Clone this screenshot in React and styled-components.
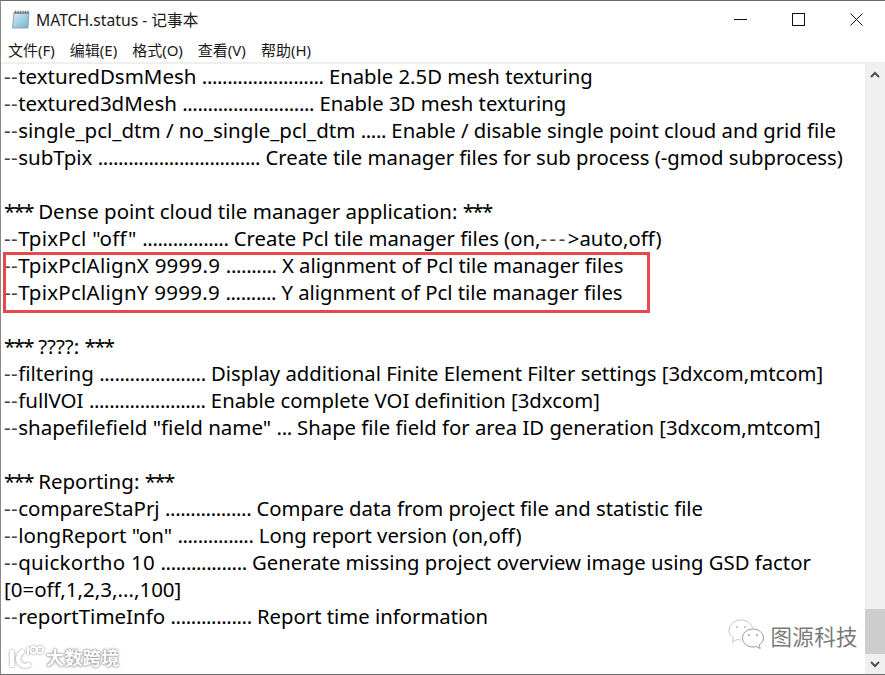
import React from 'react';
import styled, { createGlobalStyle } from 'styled-components';

const Global = createGlobalStyle`
  html, body { margin: 0; padding: 0; background: #fff; }
`;

const Window = styled.div`
  position: relative;
  box-sizing: border-box;
  width: 885px;
  height: 675px;
  overflow: hidden;
  background: #fff;
  border-top: 1px solid #6a6a6a;
  border-left: 1px solid #8a8a8a;
  border-bottom: 1px solid #6a6a6a;
  display: flex;
  flex-direction: column;
  font-family: "Noto Sans", "Noto Sans CJK SC", sans-serif;
  color: #000;
`;
const TitleBar = styled.div`
  height: 36px;
  flex: none;
  display: flex;
  align-items: center;
  padding-left: 10px;
`;
const NoteIcon = styled.svg`
  width: 20px;
  height: 21px;
  margin-right: 5px;
`;
const Title = styled.div`
  flex: 1;
  font-size: 15.7px;
  color: #1a1a1a;
`;
const WinButton = styled.div`
  width: 58px;
  height: 36px;
  display: flex;
  align-items: center;
  justify-content: center;
`;
const MenuBar = styled.div`
  height: 25px;
  flex: none;
  display: flex;
  gap: 15px;
  padding-left: 7px;
  font-size: 15px;
  align-items: center;
  color: #1a1a1a;
  border-bottom: 2px solid #efefef;
`;
const Body = styled.div`
  flex: 1;
  display: flex;
  min-height: 0;
`;
const TextArea = styled.div`
  flex: 1;
  padding-left: 3px;
  font-size: 20.5px;
  line-height: 27px;
  white-space: pre;
  position: relative;
`;
const TextFlow = styled.div`
  margin-top: -1px;
`;
const Line = styled.div`
  height: 27px;
`;
const Dash = styled.span`
  color: #444;
  letter-spacing: 0.5px;
`;
const Label = styled.span`
  letter-spacing: ${({ $wide }) => ($wide ? '0.25px' : '0')};
`;
const Dots = styled.span`
  letter-spacing: -0.42px;
`;
const Desc = styled.span`
  font-size: 20.3px;
`;
const Arrow = styled.span`
  color: #444;
  letter-spacing: 2.6px;
`;
const Stars = styled.span`
  letter-spacing: -1.7px;
`;
const Highlight = styled.div`
  position: absolute;
  left: 2px;
  top: 188px;
  width: 641px;
  height: 55px;
  border: 3px solid #e5484d;
`;
const Scrollbar = styled.div`
  width: 20px;
  flex: none;
  background: #f0f0f0;
  display: flex;
  flex-direction: column;
`;
const ScrollButton = styled.div`
  height: 20px;
  display: flex;
  align-items: center;
  justify-content: center;
`;
const ScrollTrack = styled.div`
  flex: 1;
  display: flex;
  flex-direction: column;
  justify-content: flex-end;
`;
const ScrollThumb = styled.div`
  height: 45px;
  background: #cdcdcd;
`;
const Watermark = styled.div`
  position: absolute;
  right: 27px;
  bottom: 23px;
  display: flex;
  align-items: center;
  gap: 5px;
  color: #7a7a7a;
  font-size: 21.500px;
  letter-spacing: 0.4px;
`;
const Corner = styled.div`
  position: absolute;
  left: 7px;
  bottom: 4px;
  display: flex;
  align-items: center;
  gap: 2px;
  color: #fff;
  font-size: 18px;
  font-weight: 700;
  letter-spacing: 0.4px;
  text-shadow: 0 0 3px #999, 0 0 2px #999, 0 0 1px #888;
`;
const CornerMark = styled.svg`
  filter: drop-shadow(0 0 1px #888);
`;

const LINES = [
  ['--', 'texturedDsmMesh ', '........................', ' Enable 2.5D mesh texturing'],
  ['--', 'textured3dMesh ', '..........................', ' Enable 3D mesh texturing'],
  ['--', 'single_pcl_dtm / no_single_pcl_dtm ', '.....', ' Enable / disable single point cloud and grid file'],
  ['--', 'subTpix ', '................................', ' Create tile manager files for sub process (-gmod subprocess)'],
  [],
  { title: ' Dense point cloud tile manager application: ' },
  ['--', 'TpixPcl "off" ', '.................', ' Create Pcl tile manager files (on,', 'auto,off)'],
  ['--', 'TpixPclAlignX 9999.9 ', '..........', ' X alignment of Pcl tile manager files'],
  ['--', 'TpixPclAlignY 9999.9 ', '..........', ' Y alignment of Pcl tile manager files'],
  [],
  { title: ' ????: ' },
  ['--', 'filtering ', '.....................', ' Display additional Finite Element Filter settings [3dxcom,mtcom]'],
  ['--', 'fullVOI ', '.......................', ' Enable complete VOI definition [3dxcom]'],
  ['--', 'shapefilefield "field name" ', '...', ' Shape file field for area ID generation [3dxcom,mtcom]'],
  [],
  { title: ' Reporting: ' },
  ['--', 'compareStaPrj ', '.................', ' Compare data from project file and statistic file'],
  ['--', 'longReport "on" ', '...............', ' Long report version (on,off)'],
  ['--', 'quickortho 10 ', '.................', ' Generate missing project overview image using GSD factor'],
  ['', '[0=off,1,2,3,...,100]'],
  ['--', 'reportTimeInfo ', '................', ' Report time information'],
];

const MENUS = ['文件(F)', '编辑(E)', '格式(O)', '查看(V)', '帮助(H)'];

function NotepadIcon() {
  return (
    <NoteIcon viewBox="0 0 20 21">
      <defs>
        <linearGradient id="pad" x1="0" y1="0" x2="1" y2="1">
          <stop offset="0" stopColor="#d8eef7" />
          <stop offset="1" stopColor="#6fb4cf" />
        </linearGradient>
      </defs>
      <path d="M3 3h15l-1 16H1.500z" fill="url(#pad)" stroke="#7f9aa6" strokeWidth="0.8" />
      <path d="M3 3h15v2H3z" fill="#8d9aa1" />
      <path d="M4.500 1.500v3M7 1.500v3M9.500 1.500v3M12 1.500v3M14.500 1.500v3M17 1.500v3" stroke="#5f6b72" strokeWidth="0.8" />
    </NoteIcon>
  );
}

function WechatMark() {
  return (
    <svg width="37" height="32" viewBox="0 0 37 32">
      <path d="M13 1C6.500 1 1 5.500 1 11c0 3.200 1.700 5.800 4.500 7.800L4.500 23l4.500-2.500c1.200.3 2.300.5 4 .5" fill="none" stroke="#c8c8c8" strokeWidth="1" />
      <path d="M13 1c5.800 0 10.500 3.300 11.700 8" fill="none" stroke="#c8c8c8" strokeWidth="1" />
      <path d="M25 10c-6 0-10.500 4-10.500 9s4.500 9 10.500 9c1.200 0 2.200-.2 3.200-.5l4 2-1-3.600c2.500-1.700 4.300-4 4.300-6.900 0-5-4.500-9-10.500-9z" fill="#fff" stroke="#9a9a9a" strokeWidth="1" />
      <circle cx="9" cy="8" r="1" fill="#b5b5b5" />
      <circle cx="17" cy="8" r="1" fill="#b5b5b5" />
      <circle cx="21" cy="16" r="0.9" fill="#999" />
      <circle cx="29" cy="16" r="0.9" fill="#999" />
    </svg>
  );
}

function CornerLogo() {
  return (
    <CornerMark width="36" height="26" viewBox="0 0 36 26" fill="none" stroke="#fff">
      <path d="M4 6v17" strokeWidth="4.500" />
      <path d="M16 7c-5 2-7 7-5 11 2 4 7 5 11 2" strokeWidth="4.500" />
      <path d="M20 3v8" strokeWidth="2" />
      <circle cx="25.500" cy="6" r="3.200" strokeWidth="2" />
      <circle cx="32" cy="6" r="3.200" strokeWidth="2" />
    </CornerMark>
  );
}

function Chevron({ up }) {
  return (
    <svg width="10" height="7" viewBox="0 0 10 7">
      <path d={up ? 'M1 6l4-4 4 4' : 'M1 1l4 4 4-4'} fill="none" stroke="#505050" strokeWidth="2" />
    </svg>
  );
}

function TextLine({ line }) {
  if (line.title) {
    return <Line><Stars>***</Stars>{line.title}<Stars>***</Stars></Line>;
  }
  const wide = /^(Tpix|quick)/.test(line[1] || '');
  return (
    <Line>
      {line[0] && <Dash>{line[0]}</Dash>}
      <Label $wide={wide}>{line[1]}</Label>
      {line[2] && <Dots>{line[2]}</Dots>}
      <Desc>
        {line[3]}
        {line[4] && <Arrow>---</Arrow>}
        {line[4] && '>'}
        {line[4]}
      </Desc>
    </Line>
  );
}

export default function App() {
  return (
    <Window>
      <Global />
      <TitleBar>
        <NotepadIcon />
        <Title>MATCH.status - 记事本</Title>
        <WinButton>
          <svg width="13" height="13" viewBox="0 0 13 13"><path d="M0 6.500h13" stroke="#111" /></svg>
        </WinButton>
        <WinButton>
          <svg width="13" height="13" viewBox="0 0 13 13"><rect x="0.500" y="0.500" width="12" height="12" fill="none" stroke="#111" /></svg>
        </WinButton>
        <WinButton>
          <svg width="13" height="13" viewBox="0 0 13 13"><path d="M0.500 0.500l12 12M12.500 0.500l-12 12" stroke="#111" /></svg>
        </WinButton>
      </TitleBar>
      <MenuBar>
        {MENUS.map((m) => <span key={m}>{m}</span>)}
      </MenuBar>
      <Body>
        <TextArea>
          <TextFlow>
            {LINES.map((line, i) => <TextLine key={i} line={line} />)}
          </TextFlow>
          <Highlight />
        </TextArea>
        <Scrollbar>
          <ScrollButton><Chevron up /></ScrollButton>
          <ScrollTrack><ScrollThumb /></ScrollTrack>
          <ScrollButton><Chevron /></ScrollButton>
        </Scrollbar>
      </Body>
      <Watermark>
        <WechatMark />
        图源科技
      </Watermark>
      <Corner>
        <CornerLogo />
        大数跨境
      </Corner>
    </Window>
  );
}
